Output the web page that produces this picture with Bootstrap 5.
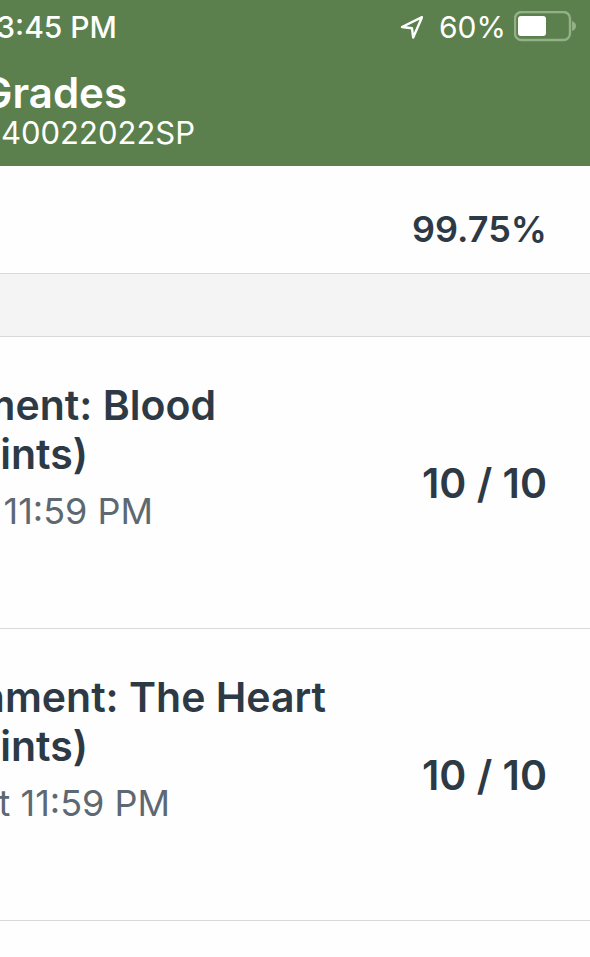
<!DOCTYPE html>
<html lang="en">
<head>
<meta charset="utf-8">
<meta name="viewport" content="width=device-width, initial-scale=1">
<title>Grades</title>
<link href="https://cdn.jsdelivr.net/npm/bootstrap@5.3.0/dist/css/bootstrap.min.css" rel="stylesheet">
<style>
body{font-family:Inter,"Liberation Sans",sans-serif;background:#fefefe;color:#2d3a45}
.app-head{background:#5b804d;color:#fff;padding-bottom:17px}
.status{font-size:30px;line-height:54px;padding-right:13px;margin-bottom:15px}
.status-time{font-weight:500}
.head-title{font-size:42px;line-height:48px;font-weight:600}
.head-course{font-size:31px;line-height:32px}
/* lines that run in from beyond the left edge, set by where they end */
.run-in{display:flex;justify-content:flex-end;white-space:nowrap;margin:0}
.end-88{width:88px}.end-117{width:117px}.end-127{width:127px}.end-152{width:153px}
.end-169{width:170px}.end-195{width:195px}.end-215{width:216px}.end-326{width:326px}
.rule{border-bottom:1px solid #d9d9d9}
.total{height:108px;padding:18px 43px 0 0;font-size:36px;font-weight:600}
.band{height:63px;background:#f4f4f4}
.grade{min-height:292px;padding-right:43px}
.grade-text{padding:43px 0 99px}
.grade-name{font-size:41px;line-height:49px;font-weight:600}
.grade-due{font-size:36px;line-height:36px;padding-top:14px;color:#5d6873}
.score{font-size:41px;font-weight:600;white-space:nowrap;padding-top:2px}
</style>
</head>
<body>
<header class="app-head">
  <div class="status d-flex align-items-center justify-content-between">
    <span class="status-time run-in end-117">3:45 PM</span>
    <div class="d-flex align-items-center">
      <svg class="me-3" width="24" height="24" viewBox="0 0 24 24" fill="none" stroke="#fff" stroke-width="2.400" stroke-linejoin="round" aria-hidden="true"><path d="M3 12 23 2.200 14.200 22.500 13 13.300Z"/></svg>
      <span>60%</span>
      <svg class="ms-2" width="63" height="32" viewBox="0 0 63 32" role="img" aria-label="Battery 60%"><rect x="1" y="1" width="55" height="28" rx="6.500" fill="none" stroke="#94b089" stroke-width="2.400"/><rect x="4" y="5" width="28" height="20" rx="3" fill="#fff"/><path d="M58 10q4 1.500 4 5t-4 5Z" fill="#94b089"/></svg>
    </div>
  </div>
  <h1 class="head-title run-in end-127">Grades</h1>
  <p class="head-course run-in end-195">40022022SP</p>
</header>
<main>
  <div class="total rule d-flex align-items-center justify-content-end">99.75%</div>
  <div class="band rule"></div>
  <section class="grade rule d-flex align-items-center justify-content-between">
    <div class="grade-text">
      <h2 class="grade-name m-0"><span class="run-in end-215">ment: Blood</span><span class="run-in end-88">ints)</span></h2>
      <p class="grade-due run-in end-152">11:59 PM</p>
    </div>
    <span class="score">10 / 10</span>
  </section>
  <section class="grade rule d-flex align-items-center justify-content-between">
    <div class="grade-text">
      <h2 class="grade-name m-0"><span class="run-in end-326">nment: The Heart</span><span class="run-in end-88">ints)</span></h2>
      <p class="grade-due run-in end-169">t 11:59 PM</p>
    </div>
    <span class="score">10 / 10</span>
  </section>
</main>
<script src="https://cdn.jsdelivr.net/npm/bootstrap@5.3.0/dist/js/bootstrap.bundle.min.js"></script>
</body>
</html>
